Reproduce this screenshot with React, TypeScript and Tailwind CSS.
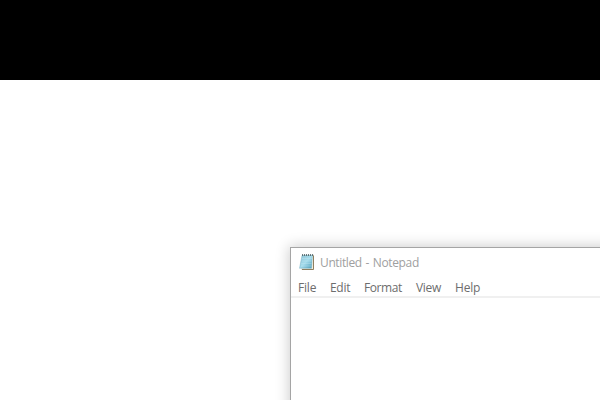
const menu = [
  { label: 'File', box: 'w-8 tracking-[-0.2px]' },
  { label: 'Edit', box: 'w-[34px] tracking-[-0.3px]' },
  { label: 'Format', box: 'w-[52px] tracking-[-0.4px]' },
  { label: 'View', box: 'w-[39px] tracking-[-0.3px]' },
  { label: 'Help', box: 'w-8 tracking-[-0.2px]' },
];

function NotepadIcon() {
  return (
    <svg width="16" height="17" viewBox="0 0 16 17" className="shrink-0">
      <defs>
        <linearGradient id="page" x1="0" y1="0" x2="1" y2="1">
          <stop offset="0" stopColor="#8fc3d4" />
          <stop offset="0.5" stopColor="#a5dcec" />
          <stop offset="1" stopColor="#4d9db8" />
        </linearGradient>
      </defs>
      <path d="M4 1H15V16H2z" fill="#f3efe2" />
      <path d="M14.5 1.5V15.5H3" fill="none" stroke="#8f7f60" strokeWidth="1" />
      <path d="M3 1.5H13.4L12.5 14.3H0.5z" fill="url(#page)" stroke="#68a6bc" strokeWidth="0.4" />
      <path d="M3 4.5H13M2.7 7H12.7M2.3 9.5H12.5M2 12H12.3" stroke="#d0edf5" strokeWidth="0.5" opacity="0.6" />
      <path d="M3 1H14.5" stroke="#3e5359" strokeWidth="1.6" strokeDasharray="1.1 0.9" />
    </svg>
  );
}

export default function App() {
  return (
    <div className="flex h-[400px] w-[600px] flex-col overflow-hidden bg-white font-['Open_Sans','Noto_Sans',sans-serif] text-[12px]">
      <div className="h-20 shrink-0 bg-black" />
      <main className="ml-[290px] mt-[167px] h-[200px] w-[340px] shrink-0 border border-[#a5a5a5] bg-white shadow-[0_0_13px_1px_rgba(0,0,0,0.2)]">
        <header className="flex h-[29px] items-center gap-[5px] pl-2 text-[#a0a0a0]">
          <NotepadIcon />
          <span className="whitespace-nowrap pt-px tracking-[-0.37px] [word-spacing:1px]">Untitled - Notepad</span>
        </header>
        <nav className="flex h-[21px] items-center border-b-2 border-[#f0f0f0] pl-[7px] pt-0.5 text-[#6d6d6d]">
          {menu.map((item) => (
            <span key={item.label} className={`${item.box} shrink-0`}>
              {item.label}
            </span>
          ))}
        </nav>
      </main>
    </div>
  );
}
